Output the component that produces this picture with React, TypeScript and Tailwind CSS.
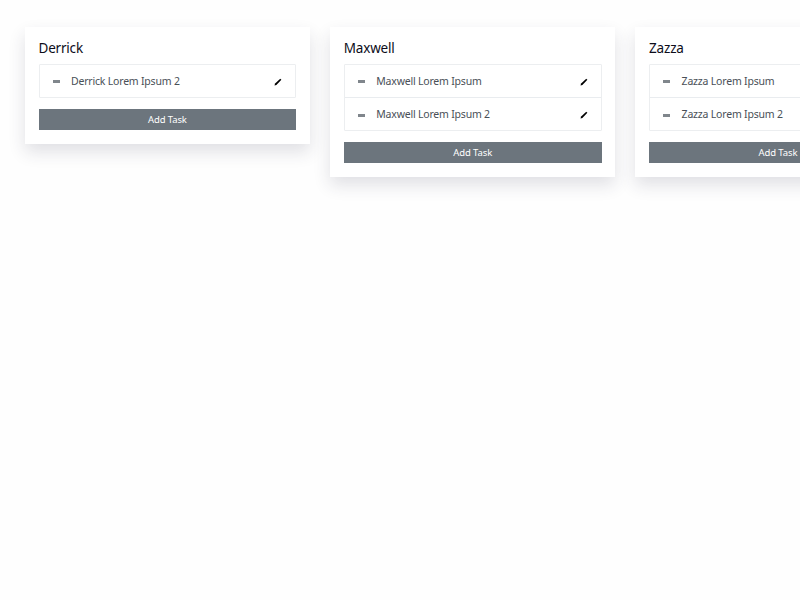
const columns = [
  { name: "Derrick", tasks: ["Derrick Lorem Ipsum 2"] },
  { name: "Maxwell", tasks: ["Maxwell Lorem Ipsum", "Maxwell Lorem Ipsum 2"] },
  { name: "Zazza", tasks: ["Zazza Lorem Ipsum", "Zazza Lorem Ipsum 2"] },
];

function Pencil() {
  return (
    <svg viewBox="0 0 10 10" className="w-[8px] h-[8px] text-black" fill="currentColor">
      <path d="M7.8 0.8 L9.2 2.2 L3 8.6 L0.6 9.4 L1.4 7 Z" />
    </svg>
  );
}

function TaskRow({ label, index, last }: { label: string; index: number; last: boolean }) {
  return (
    <div
      className={`flex items-center pl-[13px] pr-[13px] ${index > 0 ? "pt-[2px]" : "pt-[1px]"} ${
        last ? "h-[32px]" : "h-[33px] border-b border-[#e9ecef]"
      }`}
    >
      <div className="w-[7px] h-[3px] bg-[#80868c] mr-[11.5px]" />
      <span className="flex-1 text-[10.5px] tracking-[-0.2px] text-[#495057]">{label}</span>
      <Pencil />
    </div>
  );
}

export default function App() {
  return (
    <div className="w-[800px] h-[600px] overflow-hidden bg-[#fefefe] font-['Noto_Sans','Open_Sans',sans-serif]">
      <div className="flex items-start gap-5 pl-[24.5px] pt-[27px]">
        {columns.map((col) => (
          <div key={col.name} className="w-[285.3px] shrink-0 bg-white pl-[14px] pr-[13.5px] pt-[13px] pb-[13.5px] shadow-[0_8px_16px_rgba(40,40,70,0.14)]">
            <h2 className="text-[13.5px] leading-[17px] tracking-[-0.2px] mb-[7px] text-[#0d0d1a]">{col.name}</h2>
            <div className="border border-[#eceef0] rounded-[1px]">
              {col.tasks.map((t, i) => (
                <TaskRow key={t} label={t} index={i} last={i === col.tasks.length - 1} />
              ))}
            </div>
            <button className="block w-full h-[21px] pt-[1px] mt-[11px] bg-[#6c757d] text-white text-[9.5px] tracking-[-0.1px]">Add Task</button>
          </div>
        ))}
      </div>
    </div>
  );
}
